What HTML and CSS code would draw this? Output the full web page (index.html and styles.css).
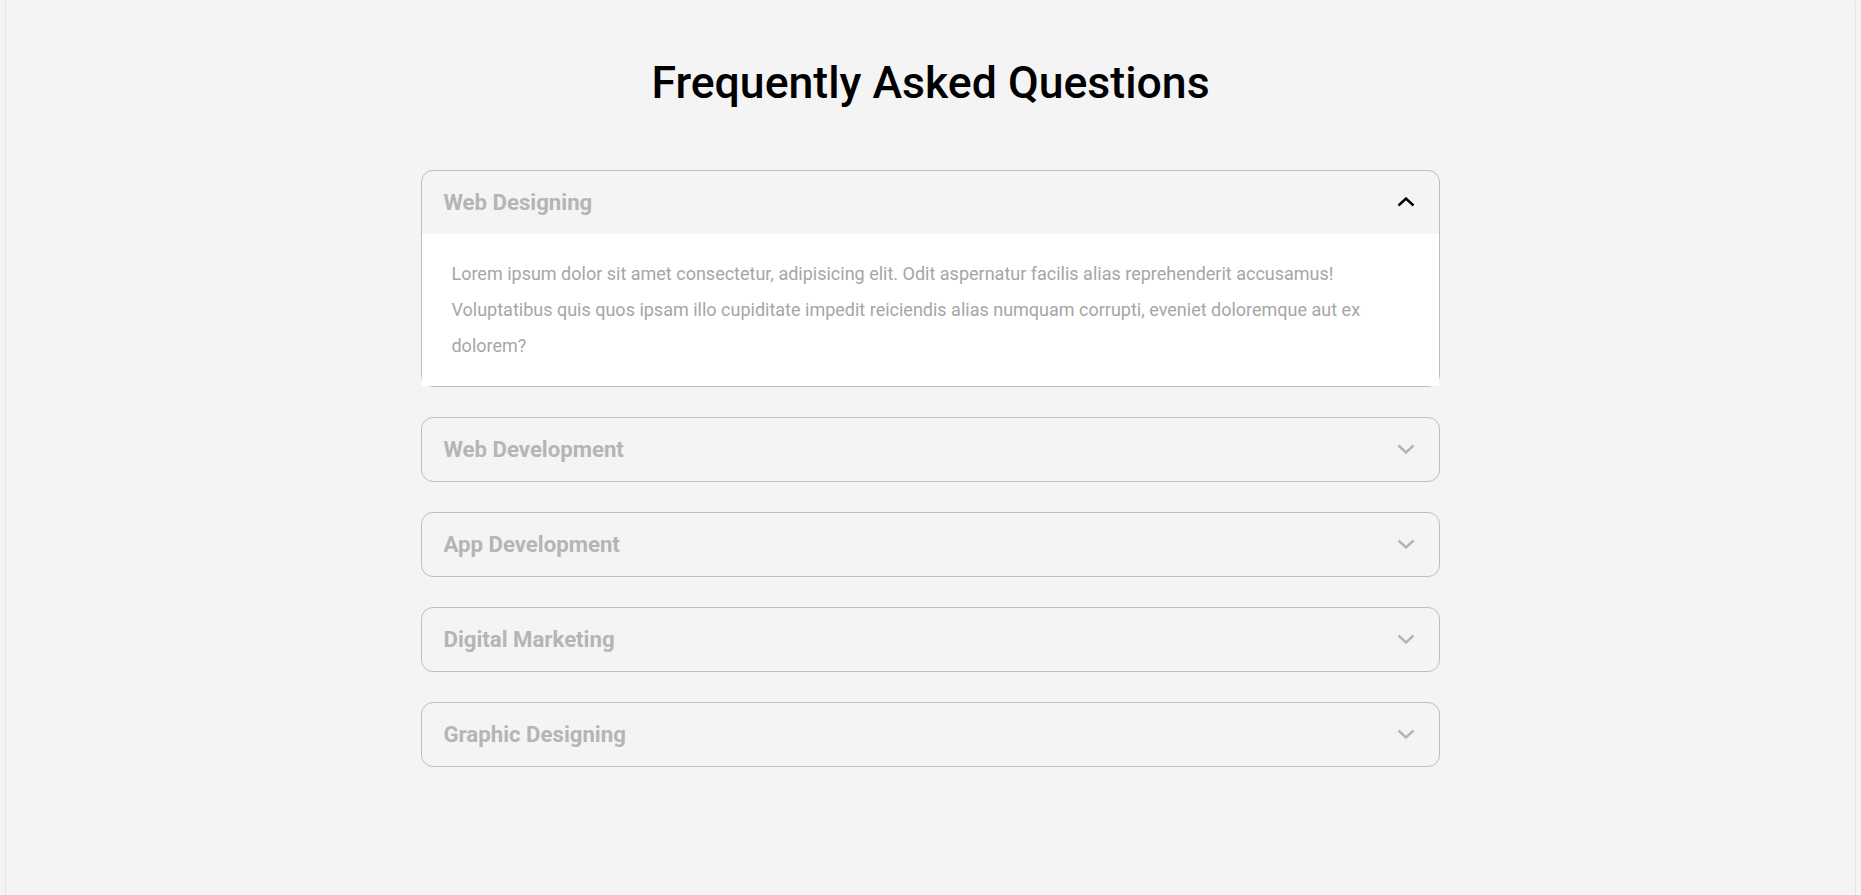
FILE: index.html
```html
<!DOCTYPE html>
<html lang="en">
<head>
<meta charset="utf-8">
<title>FAQ</title>
<link rel="stylesheet" href="styles.css">
</head>
<body>
<div class="page">
  <h1 class="title">Frequently Asked Questions</h1>
  <div class="faq">
    <div class="item open">
      <div class="head">
        <span class="q">Web Designing</span>
        <svg class="chev" width="18" height="10" viewBox="0 0 18 10"><polyline points="1.5,8.5 9,1.5 16.5,8.5" fill="none" stroke="#000" stroke-width="2.4"/></svg>
      </div>
      <div class="body">
        <p>Lorem ipsum dolor sit amet consectetur, adipisicing elit. Odit aspernatur facilis alias reprehenderit accusamus! Voluptatibus quis quos ipsam illo cupiditate impedit reiciendis alias numquam corrupti, eveniet doloremque aut ex dolorem?</p>
      </div>
    </div>
    <div class="item">
      <div class="head">
        <span class="q">Web Development</span>
        <svg class="chev" width="18" height="10" viewBox="0 0 18 10"><polyline points="1.5,1.5 9,8.5 16.5,1.5" fill="none" stroke="#b4b4b4" stroke-width="2.4"/></svg>
      </div>
    </div>
    <div class="item">
      <div class="head">
        <span class="q">App Development</span>
        <svg class="chev" width="18" height="10" viewBox="0 0 18 10"><polyline points="1.5,1.5 9,8.5 16.5,1.5" fill="none" stroke="#b4b4b4" stroke-width="2.4"/></svg>
      </div>
    </div>
    <div class="item">
      <div class="head">
        <span class="q">Digital Marketing</span>
        <svg class="chev" width="18" height="10" viewBox="0 0 18 10"><polyline points="1.5,1.5 9,8.5 16.5,1.5" fill="none" stroke="#b4b4b4" stroke-width="2.4"/></svg>
      </div>
    </div>
    <div class="item">
      <div class="head">
        <span class="q">Graphic Designing</span>
        <svg class="chev" width="18" height="10" viewBox="0 0 18 10"><polyline points="1.5,1.5 9,8.5 16.5,1.5" fill="none" stroke="#b4b4b4" stroke-width="2.4"/></svg>
      </div>
    </div>
  </div>
</div>
</body>
</html>
```
FILE: styles.css
```css
* { box-sizing: border-box; }
html, body {
  margin: 0;
  padding: 0;
  background: #f4f4f4;
  font-family: Roboto, "Liberation Sans", sans-serif;
}
body { overflow: hidden; height: 895px; }
.page {
  margin: -4px 5px 0 5px;
  min-height: 960px;
  border: 1px solid #e3e3e3;
  border-radius: 8px;
  background: #f4f4f4;
  padding-top: 60px;
}
.title {
  margin: 0 0 60px;
  text-align: center;
  font-size: 44.6px;
  font-weight: 500;
  line-height: 53px;
  color: #000;
}
.faq {
  width: 55.06%;
  margin: 0 auto;
  display: flex;
  flex-direction: column;
  gap: 30px;
}
.item {
  border: 1px solid #bdbdbd;
  border-radius: 12px;
}
.head {
  height: 63px;
  display: flex;
  align-items: center;
  justify-content: space-between;
  padding: 0 24px 2px 21px;
}
.q {
  font-size: 22.2px;
  font-weight: 700;
  color: #b5b5b5;
}
.chev { display: block; margin-top: 1px; }
.body {
  background: #fff;
  padding: 22px 30px 22px 29px;
}
.body p {
  margin: 0;
  font-size: 18px;
  line-height: 36px;
  color: #a6a6a6;
}
```
